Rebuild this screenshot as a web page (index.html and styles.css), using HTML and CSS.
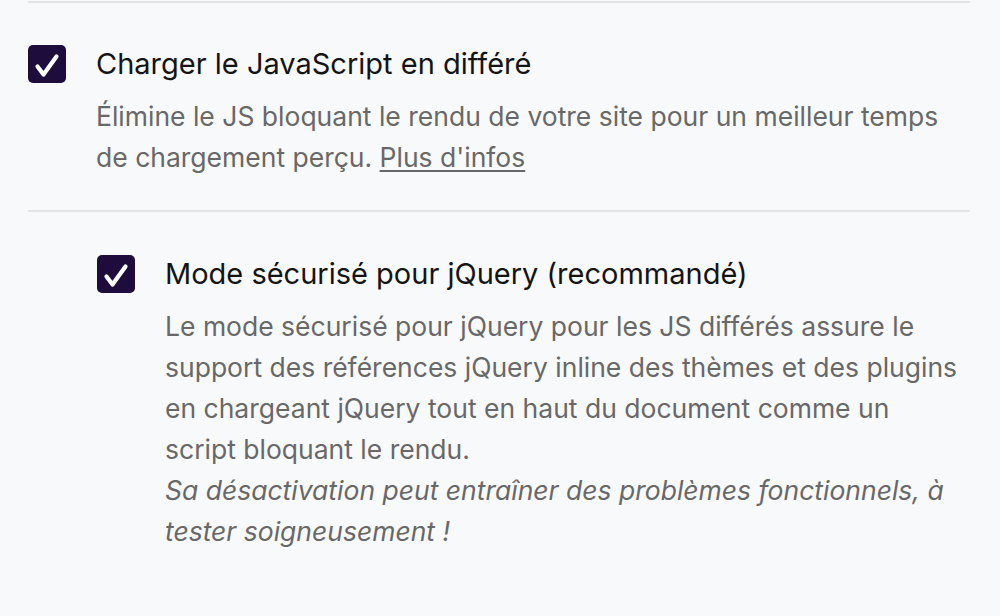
FILE: index.html
```html
<!DOCTYPE html>
<html lang="fr">
<head>
<meta charset="utf-8">
<link rel="stylesheet" href="styles.css">
</head>
<body>
<div class="page">
  <div class="option">
    <div class="row">
      <span class="checkbox"><svg viewBox="0 0 38 38" width="38" height="38"><path d="M9.5 21.5 L15.5 29.5 L28.5 11.5" fill="none" stroke="#fff" stroke-width="4.2" stroke-linecap="round" stroke-linejoin="round"/></svg></span>
      <div class="body">
        <div class="title">Charger le JavaScript en différé</div>
        <p class="desc">Élimine le JS bloquant le rendu de votre site pour un meilleur temps de chargement perçu. <a href="#" class="link">Plus d'infos</a></p>
      </div>
    </div>
  </div>
  <div class="option sub">
    <div class="row">
      <span class="checkbox"><svg viewBox="0 0 38 38" width="38" height="38"><path d="M9.5 21.5 L15.5 29.5 L28.5 11.5" fill="none" stroke="#fff" stroke-width="4.2" stroke-linecap="round" stroke-linejoin="round"/></svg></span>
      <div class="body">
        <div class="title">Mode sécurisé pour jQuery (recommandé)</div>
        <p class="desc">Le mode sécurisé pour jQuery pour les JS différés assure le support des références jQuery inline des thèmes et des plugins en chargeant jQuery tout en haut du document comme un script bloquant le rendu.<br><em>Sa désactivation peut entraîner des problèmes fonctionnels, à tester soigneusement !</em></p>
      </div>
    </div>
  </div>
</div>
</body>
</html>
```
FILE: styles.css
```css
html, body {
  margin: 0;
  padding: 0;
  background: #f8f9fb;
}
body {
  font-family: Inter, "Noto Sans", sans-serif;
  -webkit-font-smoothing: antialiased;
}
.page {
  padding: 1px 30px 0 28px;
}
.option {
  border-top: 2px solid #e3e4e8;
  padding: 42px 0 32px 0;
}
.option.sub {
  padding-top: 43px;
}
.option.sub .row {
  padding-left: 69px;
  padding-right: 8px;
}
.row {
  display: flex;
  gap: 30px;
  align-items: flex-start;
}
.checkbox {
  flex: none;
  width: 38px;
  height: 38px;
  border-radius: 5px;
  background: #1e0c3c;
  display: block;
}
.checkbox svg {
  display: block;
}
.body {
  flex: 1;
  min-width: 0;
}
.title {
  font-size: 29px;
  line-height: 38px;
  color: #141414;
  font-weight: 400;
}
.desc {
  margin: 13px 0 0 0;
  font-size: 26.5px;
  line-height: 41px;
  color: #686868;
}
.link {
  color: #686868;
  text-decoration: underline;
  text-underline-offset: 3px;
  text-decoration-thickness: 1.5px;
}
.desc em {
  font-style: italic;
}
```
